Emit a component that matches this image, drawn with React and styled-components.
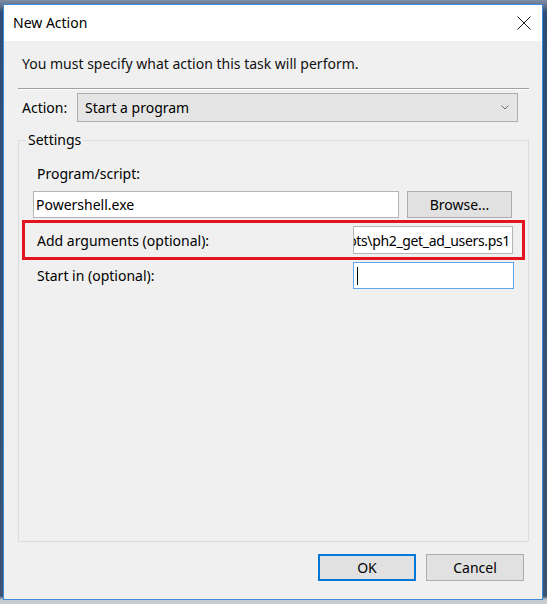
import React from "react";
import styled, { createGlobalStyle } from "styled-components";

const GlobalStyle = createGlobalStyle`
  html, body {
    margin: 0;
    padding: 0;
  }
  body {
    background: #4d5f78;
    font-family: "Noto Sans", "Open Sans", sans-serif;
    font-size: 14px;
    color: #000;
  }
`;

const Screen = styled.div`
  width: 547px;
  height: 604px;
  box-sizing: border-box;
  padding: 4px 4px 0 3px;
  background: linear-gradient(#7d8ea5, #55677f 8px, #2d4d78 12px, #3b5371 596px, #c9ccd1 600px);
  overflow: hidden;
`;

const Window = styled.div`
  width: 540px;
  height: 596px;
  box-sizing: border-box;
  border: 1px solid #3d8bd6;
  background: #f0f0f0;
  display: flex;
  flex-direction: column;
`;

const TitleBar = styled.div`
  height: 36px;
  flex: none;
  background: #fff;
  display: flex;
  align-items: center;
  justify-content: space-between;
  padding: 0 11px 0 9px;
`;

const Title = styled.span`
  font-size: 14px;
  line-height: 20px;
`;

const Content = styled.div`
  flex: 1;
  display: flex;
  flex-direction: column;
  padding: 0 13px 18px 14px;
  min-height: 0;
`;

const Heading = styled.div`
  margin-top: 13px;
  padding-left: 4px;
  line-height: 20px;
  color: #111;
`;

const Separator = styled.div`
  margin-top: 14px;
  border-top: 1px solid #a0a0a0;
  border-bottom: 1px solid #fff;
`;

const ActionRow = styled.div`
  margin-top: 3px;
  display: flex;
  align-items: center;
  padding: 0 11px 0 4px;
`;

const ActionLabel = styled.span`
  width: 55px;
  flex: none;
`;

const Combo = styled.div`
  flex: 1;
  height: 29px;
  box-sizing: border-box;
  border: 1px solid #adadad;
  background: #e5e5e5;
  display: flex;
  align-items: center;
  justify-content: space-between;
  padding: 0 8px 0 7px;
`;

const Group = styled.fieldset`
  margin: 8px 0 0;
  padding: 0 3px;
  border: 1px solid #dcdcdc;
  flex: 1;
  display: flex;
  flex-direction: column;
  min-width: 0;
`;

const Legend = styled.legend`
  margin-left: 4px;
  padding: 0 2px;
  line-height: 20px;
`;

const FieldLabel = styled.div`
  margin-top: ${(p) => p.$top || 0}px;
  padding-left: 15px;
  line-height: 20px;
`;

const ProgramRow = styled.div`
  display: flex;
  align-items: center;
  gap: 8px;
  margin-top: 7px;
  padding: 0 13px 0 11px;
`;

const Field = styled.div`
  box-sizing: border-box;
  height: ${(p) => p.$height || 27}px;
  width: ${(p) => (p.$width ? `${p.$width}px` : "auto")};
  flex: ${(p) => (p.$width ? "none" : "1")};
  background: #fff;
  border: 1px solid ${(p) => (p.$focused ? "#5ea6e9" : "#b4b4b4")};
  display: flex;
  align-items: center;
  justify-content: ${(p) => (p.$end ? "flex-end" : "flex-start")};
  padding: 0 2px;
  overflow: hidden;
  white-space: nowrap;
  letter-spacing: ${(p) => (p.$end ? "-0.35px" : "normal")};
`;

const Caret = styled.span`
  width: 1px;
  height: 18px;
  background: #000;
  margin-left: 1px;
`;

const Button = styled.button`
  width: ${(p) => p.$width || 98}px;
  height: 27px;
  flex: none;
  box-sizing: border-box;
  margin: 0;
  padding: 0;
  font-family: inherit;
  font-size: 14px;
  color: #000;
  background: #e1e1e1;
  border: ${(p) => (p.$default ? "2px solid #0078d7" : "1px solid #adadad")};
`;

const Highlight = styled.div`
  margin-top: 2px;
  height: 40px;
  box-sizing: border-box;
  border: 3px solid #e3141f;
  display: flex;
  align-items: center;
  justify-content: space-between;
  padding: 0 9px 0 12px;
`;

const StartRow = styled.div`
  margin-top: 2px;
  display: flex;
  align-items: center;
  justify-content: space-between;
  padding: 0 11px 0 15px;
`;

const Footer = styled.div`
  display: flex;
  justify-content: flex-end;
  gap: 10px;
  margin-top: 12px;
  padding-right: 5px;
`;

const CloseIcon = () => (
  <svg width="14" height="14" viewBox="0 0 14 14">
    <path d="M0.5 0.5 L13.5 13.5 M13.5 0.5 L0.5 13.5" stroke="#1a1a1a" strokeWidth="1" fill="none" />
  </svg>
);

const Chevron = () => (
  <svg width="8" height="5" viewBox="0 0 8 5">
    <path d="M0.5 0.5 L4 4 L7.5 0.5" stroke="#707070" strokeWidth="1" fill="none" />
  </svg>
);

export default function App() {
  return (
    <>
      <GlobalStyle />
      <Screen>
        <Window>
          <TitleBar>
            <Title>New Action</Title>
            <CloseIcon />
          </TitleBar>
          <Content>
            <Heading>You must specify what action this task will perform.</Heading>
            <Separator />
            <ActionRow>
              <ActionLabel>Action:</ActionLabel>
              <Combo>
                <span>Start a program</span>
                <Chevron />
              </Combo>
            </ActionRow>
            <Group>
              <Legend>Settings</Legend>
              <FieldLabel $top={14}>Program/script:</FieldLabel>
              <ProgramRow>
                <Field>Powershell.exe</Field>
                <Button $width={105}>Browse...</Button>
              </ProgramRow>
              <Highlight>
                <span>Add arguments (optional):</span>
                <Field $width={160} $height={28} $end>ots\ph2_get_ad_users.ps1</Field>
              </Highlight>
              <StartRow>
                <span>Start in (optional):</span>
                <Field $width={161} $focused>
                  <Caret />
                </Field>
              </StartRow>
            </Group>
            <Footer>
              <Button $default>OK</Button>
              <Button>Cancel</Button>
            </Footer>
          </Content>
        </Window>
      </Screen>
    </>
  );
}
